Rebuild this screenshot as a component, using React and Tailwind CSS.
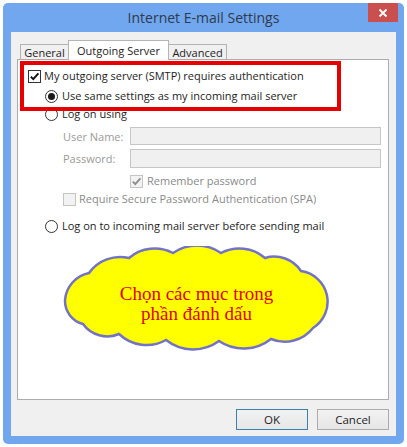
import React from "react";

function CheckBox({ checked, disabled }) {
  return (
    <span
      className={`flex items-center justify-center w-[13px] h-[13px] border shrink-0 ${
        disabled ? "border-[#c4c4c4] bg-[#f2f2f2]" : "border-[#333333] bg-white"
      }`}
    >
      {checked && (
        <svg width="11" height="11" viewBox="0 0 11 11">
          <path
            d="M1.8 5.6 L4.3 8.2 L9.4 2.4"
            fill="none"
            stroke={disabled ? "#8e8e8e" : "#111111"}
            strokeWidth="1.9"
          />
        </svg>
      )}
    </span>
  );
}

function Radio({ checked }) {
  return (
    <span className="flex items-center justify-center w-[13px] h-[13px] rounded-full border border-[#333333] bg-white shrink-0">
      {checked && <span className="w-[7px] h-[7px] rounded-full bg-[#1a1a1a]" />}
    </span>
  );
}

export default function App() {
  const font = { fontFamily: '"Open Sans", "Noto Sans", sans-serif' };
  return (
    <div className="w-[407px] h-[447px] bg-white pt-[3px] pl-[3px]" style={font}>
      <div className="w-[401px] h-[441px] bg-[#70a7ee] rounded-[5px] flex flex-col relative">
        {/* Title bar */}
        <div className="h-[29px] flex items-center justify-center text-[14px] text-[#2e3a4d]">
          Internet E-mail Settings
        </div>
        <button className="absolute top-0 right-[6px] w-[30px] h-[19px] bg-[#c9504f] flex items-center justify-center">
          <svg width="10" height="10" viewBox="0 0 10 10">
            <path d="M1.5 1.5 L8.5 8.5 M8.5 1.5 L1.5 8.5" stroke="#ffffff" strokeWidth="1.8" />
          </svg>
        </button>

        {/* Content */}
        <div className="mx-[8px] mb-[8px] flex-1 bg-[#f0f0f0] flex flex-col text-[11px] text-[#1e1e1e]">
          {/* Tabs */}
          <div className="mt-[8px] ml-[9px] h-[20px] flex items-end">
            <div className="w-[49px] h-[16px] border border-b-0 border-[#b4b4b4] bg-[#f0f0f0] flex items-center justify-center leading-[14px] pt-[1px]">
              General
            </div>
            <div className="relative z-10 -ml-px w-[101px] h-[20px] border border-b-0 border-[#b4b4b4] bg-white flex items-start justify-center pt-[2px] leading-[16px]">
              Outgoing Server
            </div>
            <div className="-ml-px w-[59px] h-[16px] border border-b-0 border-[#b4b4b4] bg-[#f0f0f0] flex items-center justify-center leading-[14px] pt-[1px]">
              Advanced
            </div>
          </div>

          {/* Panel */}
          <div className="relative ml-[6px] -mt-px w-[372px] h-[341px] border border-[#acacac] bg-white flex flex-col">
            <div className="mt-[8px] ml-[10px] h-[16px] flex items-center gap-[3px] leading-[16px]">
              <CheckBox checked />
              <span>My outgoing server (SMTP) requires authentication</span>
            </div>
            <div className="mt-[4px] ml-[27px] h-[16px] flex items-center gap-[4px] leading-[16px]">
              <Radio checked />
              <span>Use same settings as my incoming mail server</span>
            </div>
            <div className="mt-[2px] ml-[27px] h-[16px] flex items-center gap-[4px] leading-[16px]">
              <Radio />
              <span>Log on using</span>
            </div>
            <div className="mt-[5px] ml-[45px] h-[18px] flex items-center">
              <span className="w-[67px] text-[#9a9a9a] pt-[2px]">User Name:</span>
              <div className="w-[251px] h-[18px] border border-[#c6c6c6] bg-[#f0f0f0]" />
            </div>
            <div className="mt-[4px] ml-[45px] h-[19px] flex items-center">
              <span className="w-[67px] text-[#9a9a9a] pt-[2px]">Password:</span>
              <div className="w-[251px] h-[19px] border border-[#c6c6c6] bg-[#f0f0f0]" />
            </div>
            <div className="mt-[5px] ml-[112px] h-[16px] flex items-center gap-[4px] text-[#8a8a8a] leading-[16px]">
              <CheckBox checked disabled />
              <span>Remember password</span>
            </div>
            <div className="mt-[2px] ml-[45px] h-[16px] flex items-center gap-[3px] text-[#8a8a8a] leading-[16px]">
              <CheckBox disabled />
              <span>Require Secure Password Authentication (SPA)</span>
            </div>
            <div className="mt-[11px] ml-[27px] h-[16px] flex items-center gap-[4px] leading-[16px]">
              <Radio />
              <span>Log on to incoming mail server before sending mail</span>
            </div>

            {/* Red highlight annotation */}
            <div className="absolute left-[2px] top-[1px] w-[321px] h-[50px] border-[4px] border-[#e60000] pointer-events-none" />

            {/* Cloud annotation */}
            <div className="absolute left-[43px] top-[186px] w-[275px] h-[105px]">
              <svg width="275" height="105" viewBox="0 0 275 105" className="absolute inset-0">
                <path
                  d="M4 54 A30 30 0 0 1 28 27 A38 38 0 0 1 68 12 A40 40 0 0 1 112 7 A42 42 0 0 1 160 7 A40 40 0 0 1 204 12 A32 32 0 0 1 240 25 A31 31 0 0 1 252 82 A36 36 0 0 1 210 93 A44 44 0 0 1 158 95 A44 44 0 0 1 105 94 A40 40 0 0 1 58 88 A30 30 0 0 1 22 78 A24 24 0 0 1 4 54 Z"
                  fill="#ffff00"
                  stroke="#7272c6"
                  strokeWidth="2.5"
                />
              </svg>
              <div
                className="absolute inset-0 flex flex-col items-center justify-center text-[19px] leading-[20px] text-[#e20000] pt-[10px] pr-[4px]"
                style={{ fontFamily: '"Liberation Serif", serif' }}
              >
                <span>Chọn các mục trong</span>
                <span>phần đánh dấu</span>
              </div>
            </div>
          </div>

          {/* Buttons */}
          <div className="mt-[9px] ml-[225px] flex gap-[9px]">
            <button className="w-[72px] h-[21px] border border-[#3c7fb1] bg-gradient-to-b from-[#f2f2f2] to-[#e6e6e6] text-[11.5px] text-[#1e1e1e] leading-[18px]">
              OK
            </button>
            <button className="w-[72px] h-[21px] border border-[#acacac] bg-gradient-to-b from-[#f2f2f2] to-[#e6e6e6] text-[11.5px] text-[#1e1e1e] leading-[18px]">
              Cancel
            </button>
          </div>
        </div>
      </div>
    </div>
  );
}
